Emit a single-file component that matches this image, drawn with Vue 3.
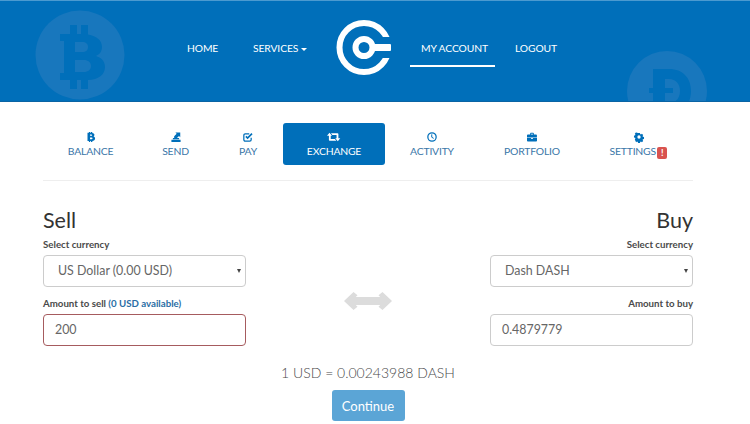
<script setup>
const tabs = [
  { key: 'balance', label: 'BALANCE', w: 95 },
  { key: 'send', label: 'SEND', w: 75 },
  { key: 'pay', label: 'PAY', w: 70 },
  { key: 'exchange', label: 'EXCHANGE', w: 102, active: true },
  { key: 'activity', label: 'ACTIVITY', w: 94 },
  { key: 'portfolio', label: 'PORTFOLIO', w: 106 },
  { key: 'settings', label: 'SETTINGS', w: 107, badge: true }
]
</script>

<template>
  <div class="page">
    <header class="hero">
      <svg class="coin btc" viewBox="0 0 90 90">
        <circle cx="45" cy="45" r="44.5" fill="#1877bd" />
        <path fill="#006fba" fill-rule="evenodd" d="M25 24h10v-9h7v9h4v-9h7v9.400c9 1.500 14 6 14 12.600 0 4.500-2.500 7.500-6 9 5 1.500 9 5 9 11 0 8-6.500 12.500-17 13v9h-7v-9h-4v9h-7v-9H25v-7h4V31h-4zM40 32v10h7c4 0 6-2 6-5s-2-5-6-5zM40 50v12h9c4 0 7-2.300 7-6s-3-6-7-6z"/>
      </svg>
      <svg class="coin doge" viewBox="0 0 80 80">
        <circle cx="40" cy="40" r="40" fill="#1877bd" />
        <path fill="#006fba" fill-rule="evenodd" d="M26 18h16c14 0 22 9 22 22s-8 22-22 22H26V42h-4v-5h4zM38 28v9h8v5h-8v10h4c7 0 11-5 11-12s-4-12-11-12z"/>
      </svg>
      <nav class="nav">
        <a class="nav-link home">HOME</a>
        <a class="nav-link services">SERVICES <i class="caret"></i></a>
        <svg class="logo" viewBox="0 0 56 56">
          <circle cx="28" cy="27.500" r="24.500" fill="none" stroke="#fff" stroke-width="6"/>
          <rect x="36" y="17" width="20" height="21" fill="#006fba"/>
          <circle cx="28" cy="27.500" r="8.500" fill="none" stroke="#fff" stroke-width="6"/>
          <path fill="#fff" d="M35 24h19a1 1 0 0 1 1 1v5a1 1 0 0 1-1 1H35z"/>
        </svg>
        <a class="nav-link account">MY ACCOUNT</a>
        <a class="nav-link logout">LOGOUT</a>
      </nav>
    </header>

    <main class="content">
      <ul class="tabs">
        <li v-for="t in tabs" :key="t.key" class="tab" :class="{ active: t.active }" :style="{ width: t.w + 'px' }">
          <svg v-if="t.key === 'exchange'" class="tab-icon wide" viewBox="0 0 16 12">
            <path d="M0 4.500L3 1l3 3.500H4.500V8.500H9.500L11.300 10.600H3.300c-.6 0-1-.4-1-1V4.500z"/>
            <path d="M16 7.500L13 11l-3-3.500h1.500V3.500H6.500L4.700 1.400h8c.6 0 1 .4 1 1V7.500z"/>
          </svg>
          <svg v-else class="tab-icon" viewBox="0 0 12 12">
            <path v-if="t.key === 'balance'" fill-rule="evenodd" d="M1.800 1H3.500V0h1.500v1h1V0h1.500v1.100C9.300 1.400 10.100 2.200 10.100 3.400c0 .8-.4 1.500-1 1.900 1.100.4 1.800 1.200 1.800 2.400 0 1.800-1.400 2.800-3.300 3V12H6v-1.300H5V12H3.500v-1.300H1.800zM4.800 3.100v1.500h1.700c.5 0 .9-.3.9-.75s-.4-.75-.9-.75zM4.800 6.600v2h2.100c.6 0 1-.4 1-1s-.4-1-1-1z"/>
            <g v-else-if="t.key === 'send'">
              <path d="M.5 9.200h11V12H.5zM2.300 7.300h7.400v1.300H2.300z"/>
              <path d="M3.800 6.800V5.100L6.800 2.100 5.300.6h5.800v5.800L9.600 4.900 7.100 7.300H3.800z"/>
            </g>
            <g v-else-if="t.key === 'pay'">
              <path fill="none" stroke="currentColor" stroke-width="1.500" d="M9.800 7v2.300c0 1-.7 1.700-1.700 1.700H2.700C1.700 11 1 10.300 1 9.300V3.900c0-1 .7-1.700 1.700-1.700H7.500"/>
              <path fill="none" stroke="currentColor" stroke-width="2" d="M3.500 5.300l2 2L10.800 2"/>
            </g>
            <g v-else-if="t.key === 'activity'">
              <circle cx="6" cy="6" r="5" fill="none" stroke="currentColor" stroke-width="1.500"/>
              <path fill="none" stroke="currentColor" stroke-width="1.200" d="M5.700 2.800v3.500l2.300 1.300"/>
            </g>
            <g v-else-if="t.key === 'portfolio'">
              <path fill-rule="evenodd" d="M3.800 3V1.800c0-.5.400-.8.800-.8h2.800c.4 0 .8.300.8.800V3h2.700c.6 0 1 .4 1 1v2.500H0V4c0-.6.400-1 1-1zM4.800 2v1h2.400V2z"/>
              <path d="M0 7.300h5v1h2v-1h5v3.200c0 .6-.4 1-1 1H1c-.6 0-1-.4-1-1z"/>
            </g>
            <path v-else fill-rule="evenodd" d="M4.800.5h2.400l.4 1.500 1 .4 1.300-.8 1.700 1.700-.8 1.300.4 1 1.500.4v2.400l-1.500.4-.4 1 .8 1.300-1.700 1.700-1.300-.8-1 .4-.4 1.500H4.800l-.4-1.500-1-.4-1.300.8L.4 9.200l.8-1.300-.4-1L-.7 6.500V4.100l1.500-.4.4-1L.4 1.400 2.100-.3l1.300.8 1-.4z" transform="translate(.6 .7) scale(.9)"/>
            <circle v-if="t.key === 'settings'" cx="6" cy="6" r="2" fill="#fff"/>
          </svg>
          <span class="tab-label">{{ t.label }}<b v-if="t.badge" class="badge">!</b></span>
        </li>
      </ul>

      <section class="exchange">
        <div class="side">
          <h2>Sell</h2>
          <label>Select currency</label>
          <div class="field select"><span>US Dollar (0.00 USD)</span><i class="arrow"></i></div>
          <label>Amount to sell <em>(0 USD available)</em></label>
          <div class="field input error">200</div>
        </div>
        <svg class="swap" viewBox="0 0 48 18">
          <path fill="#dcdcdc" d="M9.500 0l4 3.200L11.800 5h24.400l-1.700-1.800 4-3.200L48 9l-9.500 9-4-3.200 1.700-1.800H11.800l1.700 1.800-4 3.200L0 9z"/>
        </svg>
        <div class="side right">
          <h2>Buy</h2>
          <label>Select currency</label>
          <div class="field select"><span>Dash DASH</span><i class="arrow"></i></div>
          <label>Amount to buy</label>
          <div class="field input">0.4879779</div>
        </div>
      </section>

      <p class="rate">1 USD = 0.00243988 DASH</p>
      <button class="continue">Continue</button>
    </main>
  </div>
</template>

<style>
html, body { margin: 0; background: #fff; }
</style>

<style scoped>
.page {
  width: 750px;
  height: 424px;
  overflow: hidden;
  font-family: Lato, "Open Sans", sans-serif;
  color: #555;
}
.hero {
  position: relative;
  height: 100px;
  background: #006fba;
  border-top: 1px solid #4b9ad0;
  border-bottom: 1px solid #0a64a4;
  overflow: hidden;
}
.coin { position: absolute; }
.btc { left: 35px; top: 9px; width: 90px; height: 90px; }
.doge { left: 627px; top: 50px; width: 80px; height: 80px; }
.nav { position: relative; display: flex; align-items: flex-start; height: 100%; }
.nav-link {
  color: #fff;
  font-size: 10.300px;
  letter-spacing: -0.100px;
  line-height: 14px;
  padding-top: 40px;
  white-space: nowrap;
}
.home { margin-left: 187px; width: 66px; }
.services { width: 82px; }
.caret {
  display: inline-block;
  vertical-align: middle;
  border-top: 3px solid #fff;
  border-left: 3px solid transparent;
  border-right: 3px solid transparent;
}
.logo { width: 56px; height: 56px; margin: 19px 0 0 1px; flex: none; }
.account {
  margin-left: 18px;
  padding-left: 11px;
  width: 74px;
  height: 24px;
  border-bottom: 2px solid #fff;
}
.logout { margin-left: 20px; }

.content { padding: 0 57px 0 43px; }
.tabs {
  list-style: none;
  margin: 0;
  padding: 21px 0 14px;
  display: flex;
  border-bottom: 1px solid #eee;
  height: 43px;
}
.tab {
  flex: none;
  box-sizing: border-box;
  height: 42px;
  padding-top: 9px;
  display: flex;
  flex-direction: column;
  align-items: center;
  color: #3a76a8;
  border-radius: 3px;
}
.tab.active { background: #006fba; color: #fff; }
.tab-icon { width: 10px; height: 10px; fill: #006fba; color: #006fba; overflow: visible; flex: none; }
.tab-icon.wide { width: 13.300px; }
.tab.active .tab-icon { fill: #fff; color: #fff; }
.tab-label { font-size: 10.400px; letter-spacing: -0.200px; line-height: 14px; margin-top: 2px; white-space: nowrap; }
.badge {
  display: inline-block;
  background: #d9534f;
  color: #fff;
  font-size: 9px;
  line-height: 12px;
  width: 10.500px;
  text-align: center;
  border-radius: 2px;
  margin-left: 1px;
  vertical-align: -1px;
}
.exchange { display: flex; justify-content: space-between; margin-top: 27px; }
.side { width: 203px; display: flex; flex-direction: column; }
.side.right { text-align: right; }
h2 {
  margin: 0;
  font-weight: 400;
  font-size: 21.500px;
  line-height: 24px;
  color: #333;
}
label {
  font-size: 9.700px;
  font-weight: 700;
  color: #4a4a4a;
  line-height: 14px;
  margin-top: 5px;
  margin-bottom: 4px;
}
label em { font-style: normal; color: #2a6ea5; }
.field {
  box-sizing: border-box;
  height: 32px;
  border: 1px solid #ccc;
  border-radius: 4px;
  font-size: 12.400px;
  line-height: 30px;
  color: #666;
  text-align: left;
  background: #fff;
}
.select { display: flex; justify-content: space-between; align-items: center; padding: 0 4px 0 14px; margin-bottom: 4px; }
.input { padding-left: 11px; }
.error { border-color: #a65b5e; }
.arrow {
  border-top: 4px solid #444;
  border-left: 2.500px solid transparent;
  border-right: 2.500px solid transparent;
}
.swap { width: 48px; height: 18px; margin-top: 84px; }
.rate {
  margin: 17px 0 0;
  text-align: center;
  font-size: 14px;
  line-height: 20px;
  font-weight: 300;
  color: #4a4a4a;
}
.continue {
  display: block;
  margin: 7px auto 0;
  width: 73px;
  height: 31px;
  border: 0;
  border-radius: 3px;
  background: #5ba5d6;
  color: #fff;
  font-family: inherit;
  font-size: 13px;
  padding: 0;
}
</style>
